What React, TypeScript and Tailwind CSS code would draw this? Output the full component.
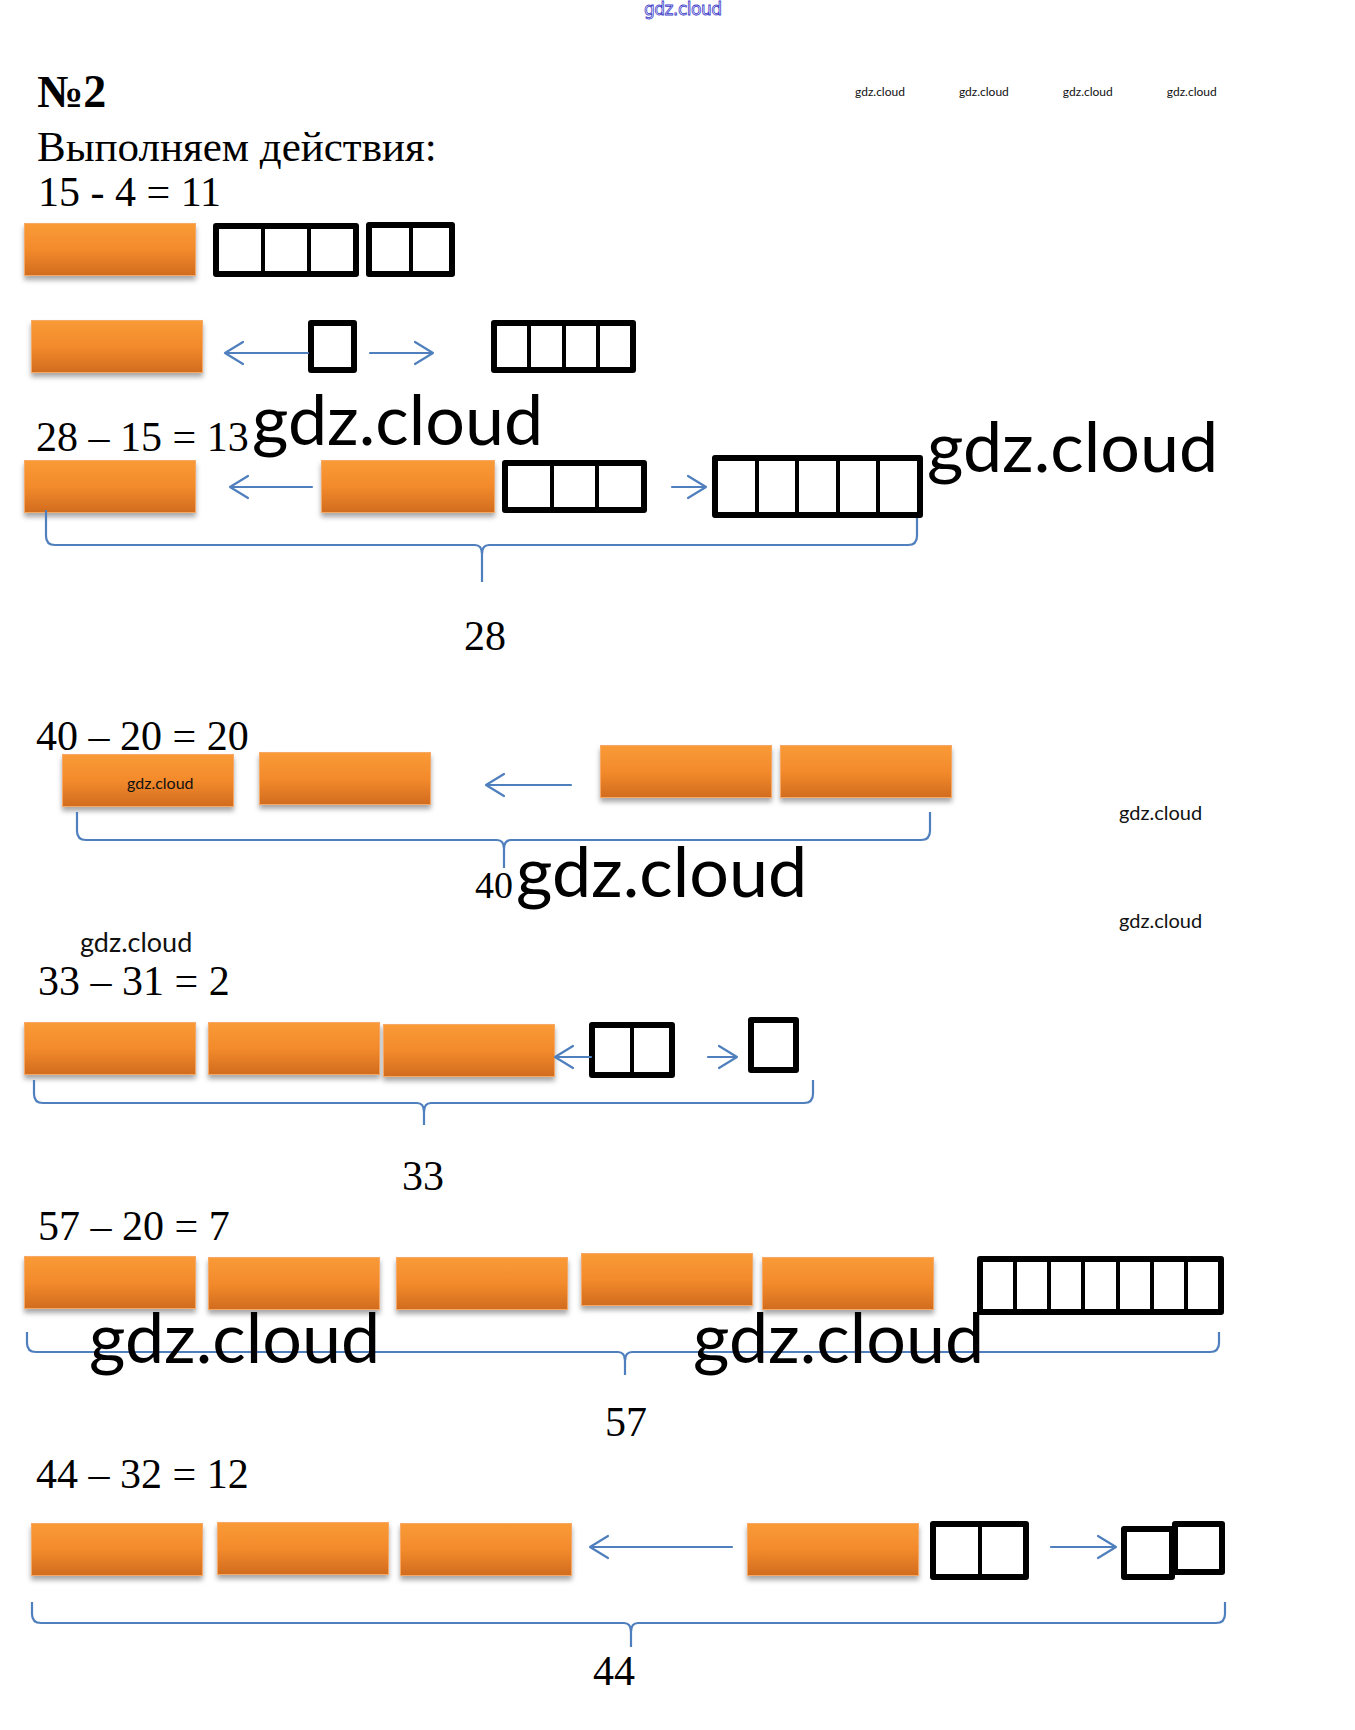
import React from "react";

const BLUE = "#4f7fbd";

function Bar({ className = "", children }: { className?: string; children?: React.ReactNode }) {
  return (
    <div
      className={`h-[53px] w-[172px] shrink-0 border border-[#f7a865] bg-linear-to-b from-[#f99a37] via-[#f38a2b] to-[#d26d1f] shadow-[0_4px_5px_rgba(0,0,0,0.35)] ${className}`}
    >
      {children}
    </div>
  );
}

function Cells({ className = "", n }: { className?: string; n: number }) {
  return (
    <div className={`relative flex shrink-0 rounded-[3px] border-[6px] border-black bg-white ${className}`}>
      {Array.from({ length: n }).map((_, i) => (
        <div key={i} className={i > 0 ? "flex-1 border-l-4 border-black" : "flex-1"} />
      ))}
    </div>
  );
}

function Arrow({ className = "", w, dir }: { className?: string; w: number; dir: "left" | "right" }) {
  const d =
    dir === "left"
      ? `M${w},12 H2 M20,1 L2,12 L20,23`
      : `M0,12 H${w - 2} M${w - 20},1 L${w - 2},12 L${w - 20},23`;
  return (
    <svg className={`relative z-[1] shrink-0 overflow-visible ${className}`} width={w} height={24} viewBox={`0 0 ${w} 24`}>
      <path d={d} fill="none" stroke={BLUE} strokeWidth={2.2} strokeLinecap="round" strokeLinejoin="round" />
    </svg>
  );
}

function Brace({ className = "", w, h, hy, sx }: { className?: string; w: number; h: number; hy: number; sx: number }) {
  const d = `M1,0 V${hy - 9} Q1,${hy} 10,${hy} H${sx - 7} Q${sx},${hy} ${sx},${hy + 9} V${h} M${sx},${hy + 9} Q${sx},${hy} ${sx + 7},${hy} H${w - 10} Q${w - 1},${hy} ${w - 1},${hy - 9} V0`;
  return (
    <svg className={`shrink-0 overflow-visible ${className}`} width={w} height={h} viewBox={`0 0 ${w} ${h}`}>
      <path d={d} fill="none" stroke={BLUE} strokeWidth={2.2} />
    </svg>
  );
}

function Eq({ className = "", children }: { className?: string; children: React.ReactNode }) {
  return <div className={`whitespace-nowrap text-[42px] leading-none text-black ${className}`}>{children}</div>;
}

function Wm({ className = "" }: { className?: string }) {
  return (
    <div className={`absolute z-10 whitespace-nowrap font-['Lato','Open_Sans',sans-serif] text-[70px] leading-none text-black ${className}`}>
      gdz.cloud
    </div>
  );
}

function SmallWm({ className = "" }: { className?: string }) {
  return (
    <div className={`absolute z-10 whitespace-nowrap font-['Lato','Open_Sans',sans-serif] leading-none text-[#111] ${className}`}>
      gdz.cloud
    </div>
  );
}

export default function App() {
  return (
    <div className="relative h-[1730px] w-[1355px] overflow-hidden bg-white font-['Liberation_Serif','Times_New_Roman',serif]">
      {/* watermark overlays */}
      <div className="absolute left-[644px] top-[1px] font-['DejaVu_Sans','Lato',sans-serif] text-[17px] leading-none tracking-[-0.5px] text-transparent [-webkit-text-stroke:0.8px_#3a3ac8]">
        gdz.cloud
      </div>
      <div className="absolute left-[855px] top-[86px] flex gap-[54px]">
        {[0, 1, 2, 3].map((i) => (
          <span key={i} className="font-['Lato','Open_Sans',sans-serif] text-[12px] leading-none text-[#111]">
            gdz.cloud
          </span>
        ))}
      </div>
      <Wm className="left-[252px] top-[383px]" />
      <Wm className="left-[927px] top-[410px]" />
      <Wm className="left-[516px] top-[835px]" />
      <SmallWm className="left-[1119px] top-[802px] text-[20px]" />
      <SmallWm className="left-[1119px] top-[910px] text-[20px]" />
      <SmallWm className="left-[80px] top-[928px] text-[27px]" />
      <Wm className="left-[89px] top-[1301px]" />
      <Wm className="left-[693px] top-[1301px]" />

      <div className="flex flex-col items-start pt-[69px]">
        <h1 className="ml-[37px] text-[46px] font-bold leading-none text-black">№2</h1>
        <p className="ml-[37px] mt-[10px] whitespace-nowrap text-[43px] leading-none text-black">Выполняем действия:</p>

        {/* 15 - 4 = 11 */}
        <Eq className="ml-[38px] mt-[3px]">15 - 4 = 11</Eq>
        <div className="ml-[24px] mt-[9px] flex items-center">
          <Bar />
          <Cells n={3} className="ml-[17px] h-[54px] w-[146px]" />
          <Cells n={2} className="ml-[7px] h-[55px] w-[89px]" />
        </div>
        <div className="ml-[31px] mt-[43px] flex items-center">
          <Bar />
          <Arrow dir="left" w={85} className="ml-[20px] mt-[12px]" />
          <Cells n={1} className="h-[53px] w-[49px]" />
          <Arrow dir="right" w={65} className="ml-[13px] mt-[12px]" />
          <Cells n={4} className="ml-[56px] h-[53px] w-[145px]" />
        </div>

        {/* 28 - 15 = 13 */}
        <Eq className="ml-[36px] mt-[43px]">28 – 15 = 13</Eq>
        <div className="ml-[24px] mt-[-3px] flex items-center">
          <Bar />
          <Arrow dir="left" w={84} className="ml-[32px]" />
          <Bar className="ml-[9px] w-[174px]" />
          <Cells n={3} className="ml-[7px] h-[53px] w-[145px]" />
          <Arrow dir="right" w={36} className="ml-[25px]" />
          <Cells n={5} className="ml-[4px] h-[63px] w-[211px]" />
        </div>
        <Brace className="ml-[45px] mt-[-8px]" w={873} h={72} hy={35} sx={437} />
        <Eq className="ml-[464px] mt-[33px]">28</Eq>

        {/* 40 - 20 = 20 */}
        <Eq className="ml-[36px] mt-[58px]">40 – 20 = 20</Eq>
        <div className="ml-[62px] mt-[-12px] flex items-start">
          <Bar className="mt-[9px]">
            <div className="pl-[64px] pt-[20px] font-['Lato','Open_Sans',sans-serif] text-[16px] leading-none text-[#111]">
              gdz.cloud
            </div>
          </Bar>
          <Bar className="ml-[25px] mt-[7px]" />
          <Arrow dir="left" w={87} className="ml-[53px] mt-[28px]" />
          <Bar className="ml-[29px] w-[167px]" />
          <Bar className="ml-[8px]" />
        </div>
        <Brace className="ml-[76px] mt-[5px]" w={855} h={56} hy={28} sx={428} />
        <div className="ml-[475px] mt-[-2px] text-[38px] leading-none text-black">40</div>

        {/* 33 - 31 = 2 */}
        <Eq className="ml-[38px] mt-[56px]">33 – 31 = 2</Eq>
        <div className="ml-[24px] mt-[15px] flex items-start">
          <Bar className="mt-[5px]" />
          <Bar className="ml-[12px] mt-[5px]" />
          <Bar className="ml-[3px] mt-[7px]" />
          <Arrow dir="left" w={38} className="ml-[-2px] mt-[28px]" />
          <Cells n={2} className="ml-[-2px] mt-[5px] h-[56px] w-[86px]" />
          <Arrow dir="right" w={31} className="ml-[33px] mt-[28px]" />
          <Cells n={1} className="ml-[9px] h-[56px] w-[51px]" />
        </div>
        <Brace className="ml-[33px] mt-[2px]" w={781} h={45} hy={23} sx={391} />
        <Eq className="ml-[402px] mt-[30px]">33</Eq>

        {/* 57 - 20 = 7 */}
        <Eq className="ml-[38px] mt-[8px]">57 – 20 = 7</Eq>
        <div className="ml-[24px] mt-[6px] flex items-start">
          <Bar className="mt-[3px]" />
          <Bar className="ml-[12px] mt-[4px]" />
          <Bar className="ml-[16px] mt-[4px]" />
          <Bar className="ml-[13px]" />
          <Bar className="ml-[9px] mt-[4px]" />
          <Cells n={7} className="ml-[43px] mt-[3px] h-[59px] w-[247px]" />
        </div>
        <Brace className="ml-[26px] mt-[17px]" w={1194} h={43} hy={20} sx={599} />
        <Eq className="ml-[605px] mt-[26px]">57</Eq>

        {/* 44 - 32 = 12 */}
        <Eq className="ml-[36px] mt-[10px]">44 – 32 = 12</Eq>
        <div className="ml-[31px] mt-[26px] flex items-start">
          <Bar className="mt-[2px]" />
          <Bar className="ml-[14px] mt-[1px]" />
          <Bar className="ml-[11px] mt-[2px]" />
          <Arrow dir="left" w={144} className="ml-[16px] mt-[14px]" />
          <Bar className="ml-[15px] mt-[2px]" />
          <Cells n={2} className="ml-[11px] h-[59px] w-[99px]" />
          <Arrow dir="right" w={67} className="ml-[22px] mt-[14px]" />
          <Cells n={1} className="ml-[3px] mt-[5px] h-[54px] w-[54px]" />
          <Cells n={1} className="ml-[-3px] h-[54px] w-[53px]" />
        </div>
        <Brace className="ml-[31px] mt-[22px]" w={1195} h={45} hy={21} sx={600} />
        <Eq className="ml-[593px] mt-[3px]">44</Eq>
      </div>
    </div>
  );
}
